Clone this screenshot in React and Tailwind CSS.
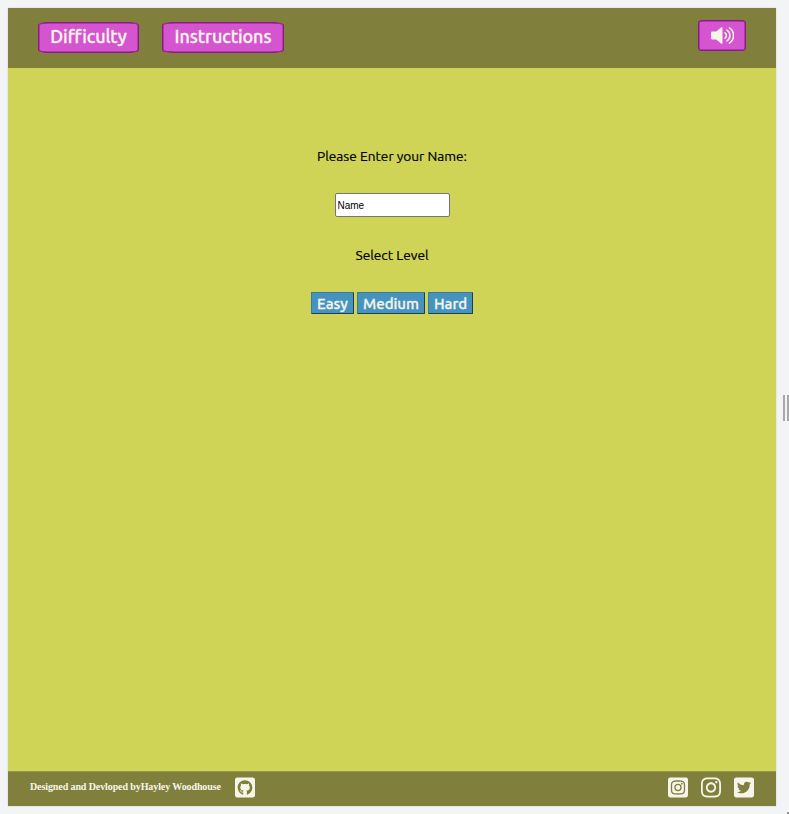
import { FaGithubSquare, FaInstagramSquare, FaInstagram, FaTwitterSquare } from "react-icons/fa";

const pink =
  "flex items-center justify-center h-[31px] rounded-[10%] border border-[#8b1a8b] bg-[#d555d0] text-[#f7f5ea] text-[18px] font-medium leading-none whitespace-nowrap shadow-[inset_0_0_0_0.5px_#8b1a8b] [-webkit-text-stroke:0.3px]";
const blue =
  "flex items-center justify-center h-[22px] border border-t-[#3d7896] border-l-[#3d7896] border-r-[#1c3c58] border-b-[#1c3c58] rounded-[1px] bg-[#4594c0] text-[#f7f5ea] text-[15px] font-medium leading-none whitespace-nowrap [-webkit-text-stroke:0.3px]";

function SpeakerIcon() {
  return (
    <svg viewBox="0 0 23 17" className="h-[17px] w-[23px]" fill="none">
      <path
        d="M1.2 4.6h4.1l4.7-4.2c.6-.5 1.5-.2 1.5.7v14.8c0 .9-.9 1.2-1.5.7l-4.7-4.2H1.2c-.7 0-1.2-.5-1.2-1.2V5.800c0-.7.5-1.200 1.200-1.200z"
        fill="currentColor"
      />
      <path
        d="M14 5.900a3.100 3.100 0 0 1 0 5.200M16 3.200a6.300 6.300 0 0 1 0 10.600M18.500.9a9.200 9.200 0 0 1 0 15.200"
        stroke="currentColor"
        strokeWidth="1.600"
        strokeLinecap="round"
      />
    </svg>
  );
}

export default function App() {
  return (
    <div className="relative flex h-[814px] w-[789px] overflow-hidden bg-[#f2f4f5] pt-2 pl-2 font-['Ubuntu','Noto_Sans',sans-serif]">
      <div className="flex h-[798px] w-[768px] flex-col bg-[#cfd457] shadow-[0_0_2px_rgba(0,0,0,0.15)]">
        <header className="flex h-[60px] shrink-0 items-start bg-[#80803c] px-[30px]">
          <button className={`${pink} mt-[14px] w-[101px] pb-[4px] tracking-[-0.1px]`}>Difficulty</button>
          <button className={`${pink} mt-[14px] ml-[23px] w-[122px] pb-[4px] tracking-[-0.1px]`}>Instructions</button>
          <button className={`${pink} mt-3 ml-auto w-12 pb-[1px]`} aria-label="Sound">
            <SpeakerIcon />
          </button>
        </header>
        <main className="flex flex-1 flex-col items-center pt-[78px] text-[13.7px] text-black">
          <p className="h-5 leading-5 [-webkit-text-stroke:0.2px]">Please Enter your Name:</p>
          <input
            className="mt-[27px] h-6 w-[115px] rounded-[2px] border border-[#767676] bg-white px-[2px] font-['Liberation_Sans',sans-serif] text-[10px] text-black outline-none placeholder:text-black"
            defaultValue="Name"
          />
          <p className="mt-[28px] h-5 leading-5 [-webkit-text-stroke:0.2px]">Select Level</p>
          <div className="mt-[27px] flex gap-[3px]">
            <button className={`${blue} w-[43px]`}>Easy</button>
            <button className={`${blue} w-[68px]`}>Medium</button>
            <button className={`${blue} w-[45px]`}>Hard</button>
          </div>
        </main>
        <footer className="flex h-[35px] shrink-0 items-center border-t border-[#989946] bg-[#80803c] pr-[22px] pb-[3px] pl-[22px] text-[#f7f5ea]">
          <p className="mt-[-2px] font-['Liberation_Serif',serif] text-[10px] font-bold tracking-[-0.1px] whitespace-nowrap">
            Designed and Devloped byHayley Woodhouse
          </p>
          <FaGithubSquare className="ml-[14px] h-[23px] w-5 shrink-0" />
          <div className="ml-auto flex gap-[13px]">
            <FaInstagramSquare className="h-[23px] w-5" />
            <FaInstagram className="h-[23px] w-5" />
            <FaTwitterSquare className="h-[23px] w-5" />
          </div>
        </footer>
      </div>
      <div className="ml-[7px] mt-[387px] flex h-[26px] gap-[2px]">
        <div className="w-[2px] bg-[#a7a7a9]" />
        <div className="w-[2px] bg-[#a7a7a9]" />
      </div>
      <div className="absolute right-0 bottom-0 h-[2px] w-[2px] bg-[#929292]" />
    </div>
  );
}
